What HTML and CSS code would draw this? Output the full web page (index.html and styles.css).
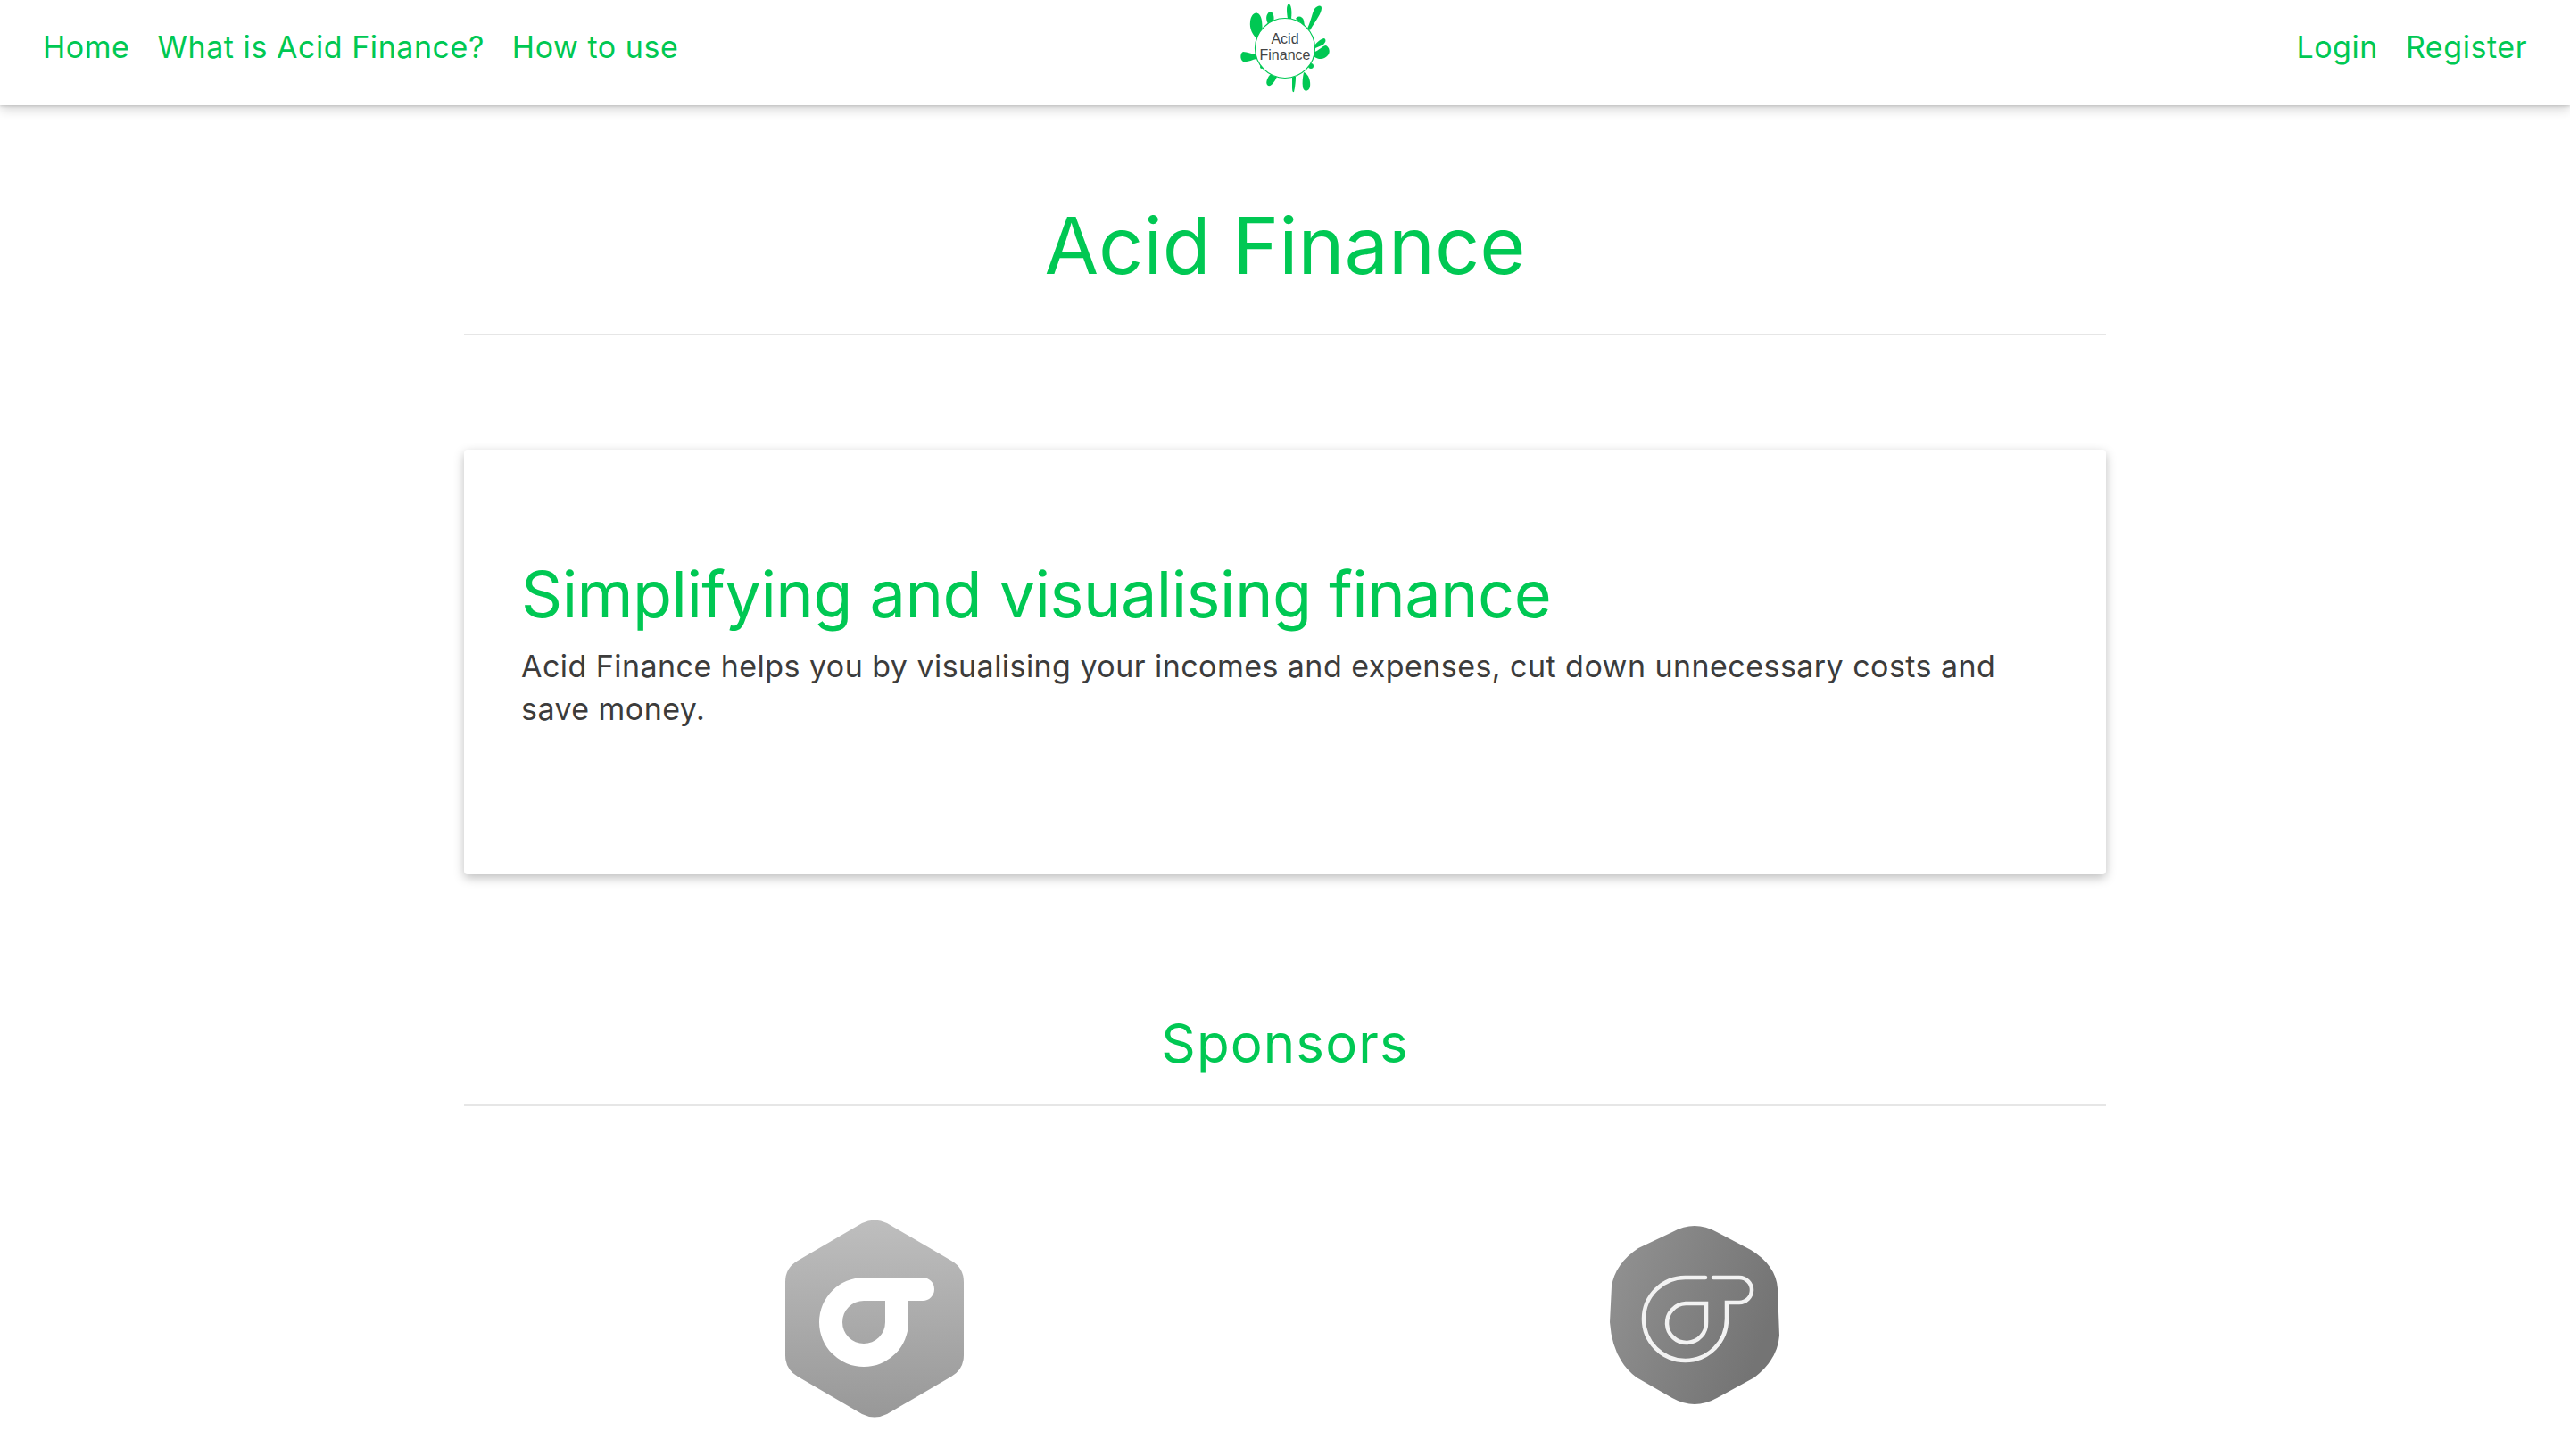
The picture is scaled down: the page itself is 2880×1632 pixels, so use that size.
FILE: index.html
```html
<!DOCTYPE html>
<html lang="en">
<head>
<meta charset="utf-8">
<title>Acid Finance</title>
<link rel="stylesheet" href="styles.css">
</head>
<body>
<nav class="nav">
  <div class="nav-side">
    <a class="nav-link" href="#">Home</a>
    <a class="nav-link" href="#">What is Acid Finance?</a>
    <a class="nav-link" href="#">How to use</a>
  </div>
  <a class="brand" href="#">
    <svg class="brand-splat" viewBox="0 0 100 100" aria-hidden="true">
      <g fill="#00c853">
        <path d="M20 41C13 35 10 28 11 20C12 12 17 8 21 12C25 16 24 24 25 30L28 36Z"/>
        <path d="M32 24C28 19 28 12 33 9C38 10 38 16 37 22Z"/>
        <path d="M53 17C52 10 51 3 54 0C57 1 58 8 57 17Z"/>
        <path d="M62 17C64 13 70 14 71 19L72 25Z"/>
        <path d="M75 28C79 20 80 12 83 6C86 2 91 1 91 5C91 11 85 18 78 30Z"/>
        <path d="M83 47C86 43 91 39 94 39C97 41 95 45 91 47L84 50Z"/>
        <path d="M83 54C88 53 92 47 96 47C100 49 101 55 98 58C94 63 88 63 83 60Z"/>
        <circle cx="79" cy="70" r="3"/>
        <path d="M71 77C77 79 79 88 78 93C77 99 71 99 70 94C69 88 70 82 71 77Z"/>
        <path d="M58 82L62 82C62 88 61 95 60 99C58 100 58 96 58 92Z"/>
        <path d="M41 82C38 88 35 93 31 92C28 90 29 85 33 80C35 78 38 78 41 82Z"/>
        <path d="M18 57L18 62C13 63 8 66 3 65C-1 62 0 55 3 54C8 54 13 57 18 57Z"/>
        <circle cx="24" cy="71" r="2"/>
      </g>
      <circle class="brand-ring" cx="50" cy="50" r="33.5"/>
    </svg>
    <span class="brand-text">Acid<br>Finance</span>
  </a>
  <div class="nav-side nav-side-right">
    <a class="nav-link" href="#">Login</a>
    <a class="nav-link" href="#">Register</a>
  </div>
</nav>

<main class="container">
  <header class="page-head">
    <h1 class="page-title">Acid Finance</h1>
    <hr class="rule">
  </header>

  <section class="card">
    <h2 class="card-title">Simplifying and visualising finance</h2>
    <p class="card-text">Acid Finance helps you by visualising your incomes and expenses, cut down unnecessary costs and save money.</p>
  </section>

  <section class="sponsors">
    <h2 class="sponsors-title">Sponsors</h2>
    <hr class="rule">
    <div class="sponsor-grid">
      <div class="sponsor">
        <svg class="logo-a" viewBox="0 0 200 222" aria-hidden="true">
          <defs>
            <linearGradient id="ga" x1="0" y1="0" x2="0" y2="1">
              <stop offset="0" stop-color="#bebebe"/>
              <stop offset="1" stop-color="#989898"/>
            </linearGradient>
          </defs>
          <path fill="url(#ga)" d="M86 4Q100 -3 114 4L186 46Q200 54 200 70V152Q200 168 186 176L114 218Q100 225 86 218L14 176Q0 168 0 152V70Q0 54 14 46Z"/>
          <path fill="#fff" fill-rule="evenodd" d="M88 65H154A13 13 0 0 1 154 91H138V115A50 50 0 0 1 38 115A50 50 0 0 1 88 65ZM88 91A24 24 0 1 0 112 115V91Z"/>
        </svg>
      </div>
      <div class="sponsor">
        <svg class="logo-b" viewBox="0 0 190 204" aria-hidden="true">
          <defs>
            <linearGradient id="gb" x1="0" y1="0" x2="1" y2="0.4">
              <stop offset="0" stop-color="#939393"/>
              <stop offset="1" stop-color="#747474"/>
            </linearGradient>
          </defs>
          <path fill="url(#gb)" d="M70 9Q95 -5 120 9L158 29Q186 46 188 72L190 125Q188 152 162 172L120 195Q95 209 70 195L30 172Q3 152 0 110L2 70Q6 44 32 27Z"/>
          <path class="logo-b-line" d="M107 60H85A46.500 46.500 0 1 0 131 106V88H145A14 14 0 0 0 145 60H116"/>
          <path class="logo-b-line" d="M108 89H85A22 22 0 1 0 108 110Z"/>
        </svg>
      </div>
    </div>
  </section>
</main>
</body>
</html>
```

FILE: styles.css
```css
* { box-sizing: border-box; }
html, body { margin: 0; padding: 0; height: 1632px; overflow: hidden; background: #fff; }
body { font-family: "Inter", "Noto Sans", sans-serif; color: #3c3c3c; }

.nav {
  display: flex;
  justify-content: space-between;
  align-items: flex-start;
  height: 118px;
  padding: 0 48px;
  background: #fff;
  box-shadow: 0 5px 12px rgba(0, 0, 0, .16), 0 1px 3px rgba(0, 0, 0, .16);
  position: relative;
}
.nav-side { flex: 1; display: flex; gap: 31px; padding-top: 31px; }
.nav-side-right { justify-content: flex-end; }
.nav-link {
  color: #00c853;
  text-decoration: none;
  font-size: 34px;
  line-height: 44px;
  letter-spacing: .55px;
}
.brand {
  position: relative;
  display: block;
  width: 100px;
  height: 104px;
  text-decoration: none;
}
.brand-splat { display: block; width: 100px; height: 100px; margin-top: 4px; overflow: visible; }
.brand-ring { fill: #fff; stroke: #00c853; stroke-width: 1.2; }
.brand-text {
  position: absolute;
  left: 0;
  right: 0;
  top: 35px;
  text-align: center;
  font-family: "Liberation Sans", sans-serif;
  font-size: 16px;
  line-height: 18px;
  color: #444;
}

.container { width: 1840px; margin: 0 auto; }
.page-head { padding-top: 97px; }
.page-title {
  margin: 0 0 39px;
  text-align: center;
  color: #00c853;
  font-size: 88px;
  line-height: 120px;
  font-weight: 400;
}
.rule { margin: 0; border: 0; border-top: 2px solid #e6e6e6; }

.card {
  margin-top: 128px;
  height: 476px;
  padding: 118px 64px 0;
  background: #fff;
  border-radius: 4px;
  box-shadow: 0 4px 12px rgba(0, 0, 0, .26);
}
.card-title {
  margin: 0 0 13px;
  color: #00c853;
  font-size: 72px;
  line-height: 88px;
  font-weight: 400;
  letter-spacing: -.55px;
}
.card-text {
  margin: 0;
  font-size: 34px;
  line-height: 48px;
  letter-spacing: .45px;
}

.sponsors { padding-top: 151px; }
.sponsors-title {
  margin: 0 0 31px;
  text-align: center;
  color: #00c853;
  font-size: 60px;
  line-height: 76px;
  font-weight: 400;
  letter-spacing: 1.1px;
}
.sponsor-grid { display: grid; grid-template-columns: 1fr 1fr; padding-top: 127px; }
.sponsor { display: flex; justify-content: center; }
.logo-a { display: block; width: 200px; height: 222px; }
.logo-b { display: block; width: 190px; height: 204px; margin: 5px 3px 0 0; }
.logo-b-line { fill: none; stroke: #f2f2f2; stroke-width: 4.5; stroke-linecap: round; }
```
